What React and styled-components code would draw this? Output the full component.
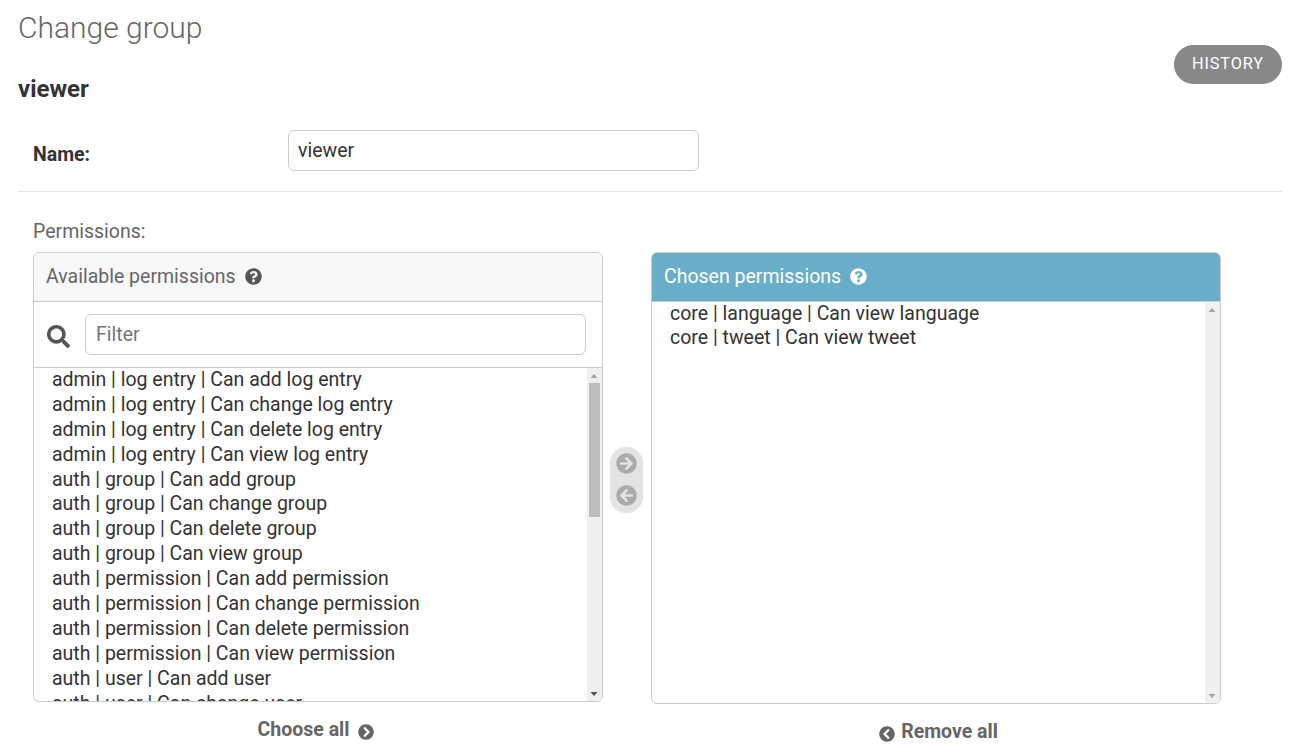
import React from "react";
import styled, { createGlobalStyle } from "styled-components";
import {
  FaSearch,
  FaQuestionCircle,
  FaArrowCircleRight,
  FaArrowCircleLeft,
  FaChevronCircleRight,
  FaChevronCircleLeft,
} from "react-icons/fa";

const models = [
  ["admin", "log entry"],
  ["auth", "group"],
  ["auth", "permission"],
  ["auth", "user"],
  ["authtoken", "token"],
  ["contenttypes", "content type"],
  ["sessions", "session"],
];
const available = [
  ...models.flatMap(([app, model]) =>
    ["add", "change", "delete", "view"].map((verb) => `${app} | ${model} | Can ${verb} ${model}`)
  ),
  "core | language | Can add language",
  "core | tweet | Can add tweet",
];
const chosen = ["core | language | Can view language", "core | tweet | Can view tweet"];

function Scrollbar({ scrollable }) {
  return (
    <Track>
      <svg width="15" height="15" viewBox="0 0 15 15">
        <path d="M3.5 10h7L7 6z" fill="#a3a3a3" />
      </svg>
      {scrollable && <Thumb />}
      <svg width="15" height="15" viewBox="0 0 15 15">
        <path d="M3.5 6h7L7 10z" fill={scrollable ? "#505050" : "#a3a3a3"} />
      </svg>
    </Track>
  );
}

function App() {
  return (
    <Page>
      <GlobalStyle />
      <Header>
        <div>
          <Title>Change group</Title>
          <ObjectName>viewer</ObjectName>
        </div>
        <HistoryBtn>HISTORY</HistoryBtn>
      </Header>
      <FormRow>
        <NameLabel>Name:</NameLabel>
        <NameInput defaultValue="viewer" />
      </FormRow>
      <FieldBox>
        <PermLabel>Permissions:</PermLabel>
        <Selector>
          <Column>
            <Panel>
              <PanelTitle>
                Available permissions <FaQuestionCircle />
              </PanelTitle>
              <FilterRow>
                <FaSearch />
                <FilterInput placeholder="Filter" />
              </FilterRow>
              <ListBox $height={333}>
                <List $rowHeight={24.9}>
                  {available.map((item) => (
                    <li key={item}>{item}</li>
                  ))}
                </List>
                <Scrollbar scrollable />
              </ListBox>
            </Panel>
            <ChooseAll>
              Choose all <FaChevronCircleRight />
            </ChooseAll>
          </Column>
          <Arrows>
            <FaArrowCircleRight />
            <FaArrowCircleLeft />
          </Arrows>
          <Column>
            <Panel>
              <PanelTitle $chosen>
                Chosen permissions <FaQuestionCircle />
              </PanelTitle>
              <ListBox $height={401}>
                <List $rowHeight={24}>
                  {chosen.map((item) => (
                    <li key={item}>{item}</li>
                  ))}
                </List>
                <Scrollbar />
              </ListBox>
            </Panel>
            <RemoveAll>
              <FaChevronCircleLeft /> Remove all
            </RemoveAll>
          </Column>
        </Selector>
      </FieldBox>
    </Page>
  );
}

export default App;

const GlobalStyle = createGlobalStyle`
  html, body {
    margin: 0;
    height: 100%;
    overflow: hidden;
    background: #fff;
  }
  body {
    font-family: Roboto, "Liberation Sans", sans-serif;
    color: #333;
  }
`;

const Page = styled.div`
  padding: 0 13px 0 18px;
  height: 753px;
  box-sizing: border-box;
`;

const Header = styled.div`
  display: flex;
  justify-content: space-between;
  align-items: flex-start;
`;

const Title = styled.h1`
  margin: 0;
  padding-top: 10px;
  font-size: 30px;
  line-height: 35px;
  font-weight: 300;
  color: #666;
`;

const ObjectName = styled.h2`
  margin: 30px 0 0;
  font-size: 24px;
  line-height: 28px;
  font-weight: 700;
  color: #333;
`;

const HistoryBtn = styled.a`
  display: flex;
  align-items: center;
  justify-content: center;
  margin-top: 45px;
  width: 108px;
  height: 39px;
  padding-bottom: 3px;
  box-sizing: border-box;
  border-radius: 20px;
  background: #888;
  color: #fff;
  font-size: 16.25px;
  letter-spacing: 0.9px;
`;

const FormRow = styled.div`
  display: flex;
  align-items: flex-start;
  padding: 27px 0 20px 15px;
  border-bottom: 1px solid #e6e6e6;
`;

const NameLabel = styled.label`
  width: 255px;
  padding-top: 13px;
  font-size: 19.5px;
  line-height: 23px;
  font-weight: 700;
  color: #333;
`;

const NameInput = styled.input`
  width: 411px;
  height: 41px;
  box-sizing: border-box;
  padding: 0 9px;
  border: 1px solid #ccc;
  border-radius: 6px;
  font: 400 19.5px Roboto, sans-serif;
  color: #333;
  outline: none;
`;

const FieldBox = styled.div`
  padding: 28px 0 0 15px;
`;

const PermLabel = styled.div`
  font-size: 19.5px;
  line-height: 23px;
  color: #666;
  margin-bottom: 9px;
`;

const Selector = styled.div`
  display: flex;
  align-items: flex-start;
`;

const Column = styled.div`
  width: 570px;
`;

const Panel = styled.div`
  border: 1px solid #ccc;
  border-radius: 6px;
  overflow: hidden;
`;

const PanelTitle = styled.div`
  display: flex;
  align-items: center;
  gap: 8px;
  height: 49px;
  padding: 0 12px 2px;
  box-sizing: border-box;
  font-size: 19.5px;
  color: ${(p) => (p.$chosen ? "#fff" : "#666")};
  background: ${(p) => (p.$chosen ? "#68aec9" : "#f8f8f8")};
  border-bottom: 1px solid #ccc;
  svg {
    width: 17px;
    height: 17px;
    margin-left: 1px;
    color: ${(p) => (p.$chosen ? "#fff" : "#555")};
  }
`;

const FilterRow = styled.div`
  display: flex;
  align-items: center;
  gap: 15px;
  height: 65px;
  padding: 0 16px 0 13px;
  border-bottom: 1px solid #ccc;
  svg {
    width: 23px;
    height: 23px;
    color: #555;
    flex-shrink: 0;
    margin-top: 4px;
  }
`;

const FilterInput = styled.input`
  flex: 1;
  min-width: 0;
  height: 41px;
  box-sizing: border-box;
  padding: 0 10px;
  border: 1px solid #ccc;
  border-radius: 6px;
  font: 400 19.5px Roboto, sans-serif;
  outline: none;
  &::placeholder {
    color: #777;
  }
`;

const ListBox = styled.div`
  position: relative;
  height: ${(p) => p.$height}px;
  overflow: hidden;
`;

const List = styled.ul`
  list-style: none;
  margin: 0;
  padding: 0 0 0 18px;
  font-size: 19.5px;
  color: #333;
  line-height: ${(p) => p.$rowHeight}px;
  li {
    height: ${(p) => p.$rowHeight}px;
    white-space: nowrap;
  }
`;

const Track = styled.div`
  position: absolute;
  top: 0;
  right: 0;
  bottom: 0;
  width: 15px;
  display: flex;
  flex-direction: column;
  background: #f0f0f0;
  svg {
    flex-shrink: 0;
  }
  svg:last-child {
    margin-top: auto;
  }
`;

const Thumb = styled.div`
  width: 11px;
  height: 134px;
  margin-left: 2px;
  background: #bdbdbd;
`;

const Arrows = styled.div`
  display: flex;
  flex-direction: column;
  align-items: center;
  gap: 11px;
  align-self: flex-start;
  width: 33px;
  height: 66px;
  margin: 195px 8px 0 7px;
  padding-top: 6px;
  box-sizing: border-box;
  border-radius: 16px;
  background: #e3e3e3;
  svg {
    width: 21px;
    height: 21px;
    color: #aaa;
  }
`;

const ChooseAll = styled.div`
  display: flex;
  align-items: center;
  justify-content: center;
  gap: 9px;
  padding: 16px 4px 0 0;
  font-size: 19.5px;
  line-height: 23px;
  font-weight: 700;
  color: #666;
  svg {
    width: 16px;
    height: 16px;
    margin-top: 4px;
  }
`;

const RemoveAll = styled(ChooseAll)`
  padding: 16px 0 0 5px;
  gap: 6px;
`;
